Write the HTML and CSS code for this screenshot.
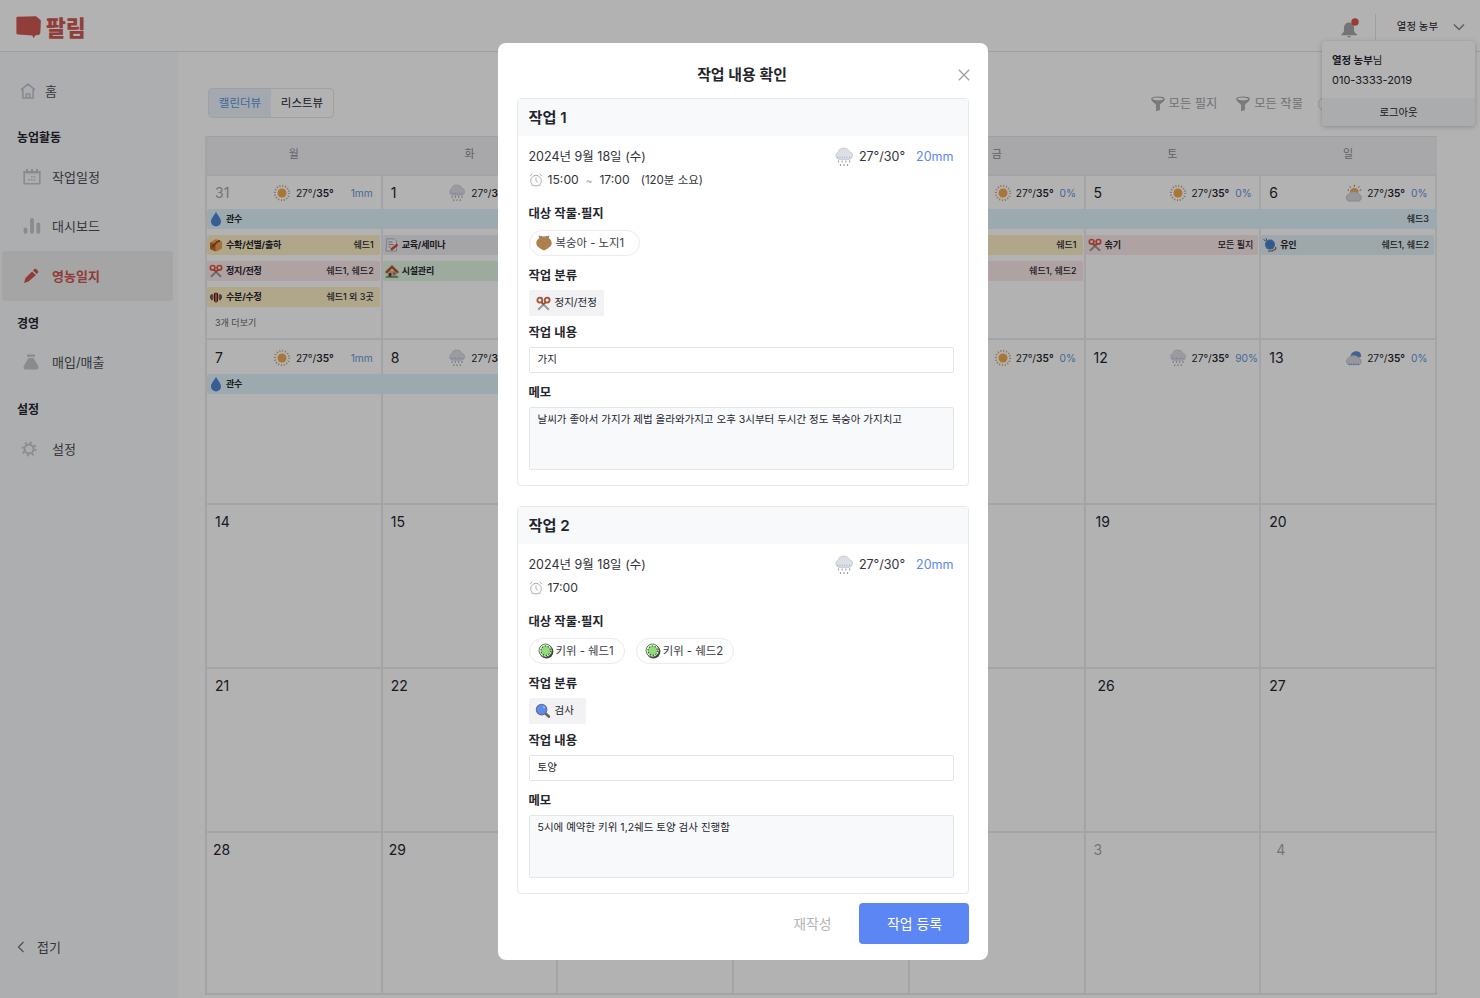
FILE: index.html
```html
<!DOCTYPE html>
<html lang="ko">
<head>
    <meta charset="UTF-8">
    <meta name="viewport" content="width=device-width, initial-scale=1.0">
    <title>팔림 - 영농일지</title>
    <link rel="stylesheet" href="styles.css">
</head>
<body>

    <!-- icons -->
    <svg class="defs" width="0" height="0">
        <symbol id="sun" viewBox="0 0 20 20">
            <circle cx="10" cy="10" r="8" fill="none" stroke="#c99a6a" stroke-width="2.2" stroke-dasharray="1.1 2.04"/>
            <circle cx="10" cy="10" r="5" fill="#f5a850"/>
        </symbol>
        <symbol id="rain" viewBox="0 0 20 20">
            <path d="M5 12.5a4 4 0 0 1-.6-7.6A5 5 0 0 1 10 1.2a5 5 0 0 1 5.2 3.4 4 4 0 0 1-.2 7.9z" fill="#dedfe5" stroke="#c6c7ce" stroke-width=".8"/>
            <path d="M3 10.4h14" stroke="#9eb4e8" stroke-width="1.5" stroke-dasharray="1 1.4"/>
            <path d="M4.5 13.5v2M8.2 13.5v2M11.9 13.5v2M15.6 13.5v2M6.4 17v2M10 17v2M13.6 17v2" stroke="#9b9ca6" stroke-width="1.1"/>
        </symbol>
        <symbol id="suncloud" viewBox="0 0 20 20">
            <path d="M5.4 9.5a5 5 0 0 1 10 0z" fill="#f5a850"/>
            <path d="M10.4 1v1.8M5.2 2.6l1 1.4M15.8 2.6l-1 1.4M3 6.4l1.4.6M18 6.4l-1.6.6" stroke="#8a6b3c" stroke-width="1.1"/>
            <path d="M4.5 19a4 4 0 0 1-.6-7.6 7 7 0 0 1 11.6 0A4 4 0 0 1 15.5 19z" fill="#d8d9df" stroke="#b6b7c0" stroke-width=".8"/>
        </symbol>
        <symbol id="nightcloud" viewBox="0 0 20 20">
            <path d="M6 9c0-4 3-6.5 6.5-6.5S18 4.500 18 8.500L14 10z" fill="#5e8fd0"/>
            <path d="M4.500 17.500a4 4 0 0 1-.6-7.400 7 6.500 0 0 1 11.600 0 4 4 0 0 1 0 7.400z" fill="#d8d9df" stroke="#b6b7c0" stroke-width=".8"/>
            <path d="M4 17h12" stroke="#6f9fe0" stroke-width="1.500" stroke-dasharray="1.500 1"/>
        </symbol>
        <symbol id="drop" viewBox="0 0 12 16">
            <path d="M6 1C8 4.600 11 7.300 11 10.400A5 5 0 0 1 1 10.400C1 7.300 4 4.600 6 1z" fill="#5086d6"/>
        </symbol>
        <symbol id="box" viewBox="0 0 14 14">
            <path d="M1 4.500 7 1l6 2.500v7L7.500 13.500 1 11z" fill="#f0a04e"/>
            <path d="M1 4.500 6.500 6v7.500L1 11z" fill="#c36a2c"/>
            <path d="M3 9 8 4l3-1.500" fill="none" stroke="#8a3d22" stroke-width="1.500"/>
        </symbol>
        <symbol id="scissors" viewBox="0 0 14 14">
            <path d="M4.800 5.800 12 12.800M9.200 5.800 2 12.800" stroke="#9a9aa0" stroke-width="1.900"/>
            <circle cx="3.600" cy="3.800" r="2.300" fill="none" stroke="currentColor" stroke-width="1.700"/>
            <circle cx="10.400" cy="3.800" r="2.300" fill="none" stroke="currentColor" stroke-width="1.700"/>
            <path d="M5 5.400 7 7.800l2-2.400" fill="none" stroke="currentColor" stroke-width="1.500"/>
        </symbol>
        <symbol id="bee" viewBox="0 0 14 14">
            <path d="M2 4.500 3.800 4v6L2.500 10.500Q.5 8.500 1 6zM12 4.500 10.200 4v6l1.300.5Q13.500 8.500 13 6z" fill="#5b5463"/>
            <path d="M7 2.500q2.600 0 2.600 4.500T7 13Q4.400 11.500 4.400 7T7 2.500z" fill="#c9562a"/>
            <path d="M5.600 3v8.500M8.400 3v8.500" stroke="#33222c" stroke-width="1"/>
            <path d="M7 4v7" stroke="#d98a6a" stroke-width=".8"/>
        </symbol>
        <symbol id="note" viewBox="0 0 14 14">
            <path d="M2 .8h7l2.500 2.500V13H1z" fill="#f4f4f7" stroke="#a6a6ad" stroke-width=".8"/>
            <path d="M3.500 4h4M3.500 6.500h5M3.500 9h2" stroke="#85858d" stroke-width=".9"/>
            <path d="M6 11.800 12.500 6.500" stroke="#da4a35" stroke-width="2.400"/>
        </symbol>
        <symbol id="house" viewBox="0 0 14 14">
            <path d="M2.500 6.500h9V13h-9z" fill="#e5b183"/>
            <path d="M.4 8 7 1.500 13.600 8l-1.400 1L7 4.200 1.800 9z" fill="#b0522f" stroke="#b0522f" stroke-width=".8"/>
            <path d="M3.800 9h2.500v4H3.800z" fill="#5b3440"/>
            <path d="M8 8.500h2.400v2H8z" fill="#4f79c4"/>
            <path d="M.8 13h12.400" stroke="#4d8a4d" stroke-width="1.400"/>
        </symbol>
        <symbol id="yarn" viewBox="0 0 14 14">
            <path d="M.5 1.500l3 2M3 .3l1 2.500" stroke="#6d6d75" stroke-width="1"/>
            <circle cx="7" cy="6.600" r="5" fill="#4d86d0"/>
            <path d="M3.500 5.500l6 5M5 3.500l6 4.500" stroke="#3b6bb0" stroke-width=".7"/>
            <path d="M12.500 9c1.200 2-1 3.300-3 3.200M5 13h5" fill="none" stroke="#7a5648" stroke-width="1.100"/>
        </symbol>
        <symbol id="clock" viewBox="0 0 14 14">
            <circle cx="7" cy="7.700" r="5.300" fill="none" stroke="#a4a4aa" stroke-width=".9"/>
            <path d="M7 4.800v3.100l1.900 1.500M.8 3.200 3.300.9M13.200 3.200 10.700.9M3.300 12l-1 1.300M10.700 12l1 1.300" fill="none" stroke="#a4a4aa" stroke-width=".9"/>
        </symbol>
        <symbol id="peach" viewBox="0 0 16 16">
            <path d="M2.500.4 8 1.500l5.500-1.100-1 3.800h-9z" fill="#8a8a8e"/>
            <path d="M8 2.300c4.500 0 7.700 2 7.700 5.900 0 3.800-4.700 5.300-7.700 7.400C5 13.500.3 12 .3 8.200.3 4.300 3.500 2.300 8 2.300z" fill="#b07f4b"/>
        </symbol>
        <symbol id="kiwi" viewBox="0 0 16 16">
            <circle cx="8.500" cy="8.600" r="6.900" fill="#3b3f3b"/>
            <circle cx="7.500" cy="7.500" r="6.500" fill="#f1f7ee" stroke="#4c6b45" stroke-width=".9"/>
            <circle cx="7.700" cy="7.700" r="5" fill="#8fdc79"/>
            <circle cx="7.700" cy="7.700" r="4.700" fill="none" stroke="#2f4f2c" stroke-width="1.100" stroke-dasharray="1.300 1.650"/>
        </symbol>
        <symbol id="glass" viewBox="0 0 16 16">
            <path d="M10.500 10.500 13.800 13.600" stroke="#62656c" stroke-width="2.700" stroke-linecap="round"/>
            <circle cx="6.600" cy="6.600" r="5.300" fill="#5a8bee" stroke="#6d6e75" stroke-width="1.100"/>
            <path d="M8.500 3.800l1 1" stroke="#c9dcfc" stroke-width="1.300"/>
        </symbol>
        <symbol id="funnel" viewBox="0 0 14 16">
            <path d="M.6 3.200C.6 6.200 5 7.500 5 9v6.300l4-1.200V9c0-1.500 4.400-2.800 4.400-5.800z" fill="#b0b0b4"/>
            <ellipse cx="7" cy="3" rx="6.200" ry="2" fill="#fff" stroke="#a5a5aa" stroke-width="1.200"/>
        </symbol>
    </svg>

    <header class="header">
        <div class="logo">
            <svg width="26" height="23" viewBox="0 0 26 23"><path d="M1.500.8 20 .3 24 3.500q1 .5.900 2L24.300 17q-.1 1.800-2 1.900l-2.800.3-1.900 3-1.300-2.800L2 18.500Q.4 18.400.4 17V2Q.4.900 1.500.8z" fill="#cf5a53"/></svg>
            <span>팔림</span>
        </div>
        <div class="header-right">
            <svg class="bell" width="18" height="20" viewBox="0 0 18 20">
                <path d="M8 4.500a5 5 0 0 1 5 5V13q.5 2 3 3.200v1H.4v-1Q2.500 15 3 13V9.500a5 5 0 0 1 5-5zM5.800 18h4.600L8.100 19.800z" fill="#a7a7ab"/>
                <circle cx="14" cy="4" r="3.700" fill="#d8574b"/>
            </svg>
            <div class="user">
                <span>열정 농부</span>
                <svg width="12" height="8" viewBox="0 0 12 8"><path d="M1 1.500 6 6.500 11 1.500" fill="none" stroke="#87878d" stroke-width="1.500"/></svg>
            </div>
        </div>
        <div class="user-menu">
            <div class="user-info">
                <p><b>열정 농부</b>님</p>
                <p class="phone">010-3333-2019</p>
            </div>
            <div class="logout">로그아웃</div>
        </div>
    </header>

    <div class="container">
        <nav class="sidebar">
            <a class="menu home">
                <svg width="16" height="16" viewBox="0 0 16 16"><path d="M1 6.800 8 1l7 5.800M2.800 6v9h10.400V6M6.300 15v-4h3.400v4" fill="none" stroke="#c6c6cd" stroke-width="1.700"/></svg>
                홈
            </a>
            <h3>농업활동</h3>
            <a class="menu">
                <svg width="18" height="18" viewBox="0 0 18 18"><path d="M1.200 4h15.600v11.800H1.200z" fill="none" stroke="#c6c6cd" stroke-width="1.600"/><path d="M.4 3h17.200v2.600H.4zM3 1h2v3H3zM8 1h2v3H8zM13 1h2v3h-2z" fill="#c6c6cd"/><path d="M8 8.700h5.500M5 11.700h8.500" stroke="#c6c6cd" stroke-width="1.600" stroke-dasharray="1.600 1.200"/></svg>
                작업일정
            </a>
            <a class="menu">
                <svg width="18" height="18" viewBox="0 0 18 18"><path d="M2.500 14.800v-2.500M9 14.800V2.800M15.300 14.800V7.500" stroke="#c6c6cd" stroke-width="3.800" stroke-linecap="round"/></svg>
                대시보드
            </a>
            <a class="menu active">
                <svg width="16" height="16" viewBox="0 0 16 16"><path d="M9 3.400 13 7 5.500 13.500 1 15 2.500 10zM10 2.500l1.500-1.400q1.200-.7 2.300.5l1 1.100q1 1.200 0 2.200L13.800 6z" fill="#cf554c"/></svg>
                영농일지
            </a>
            <h3>경영</h3>
            <a class="menu">
                <svg width="16" height="16" viewBox="0 0 16 16"><path d="M4 .5h8v2.300H4zM5.500 4h5L15 11.500q1.500 4-2.500 4h-9q-4 0-2.500-4z" fill="#c6c6cd"/></svg>
                매입/매출
            </a>
            <h3>설정</h3>
            <a class="menu gear">
                <svg width="16" height="16" viewBox="0 0 16 16"><circle cx="8" cy="8" r="6.500" fill="none" stroke="#c6c6cd" stroke-width="2" stroke-dasharray="2 3.100"/><circle cx="8" cy="8" r="4.500" fill="none" stroke="#c6c6cd" stroke-width="1.900"/></svg>
                설정
            </a>
            <div class="fold">
                <svg width="8" height="12" viewBox="0 0 8 12"><path d="M6.500 1 1.500 6l5 5" fill="none" stroke="#77777d" stroke-width="1.300"/></svg>
                접기
            </div>
        </nav>

        <main class="main">
            <div class="toolbar">
                <div class="toggle">
                    <span class="on">캘린더뷰</span>
                    <span>리스트뷰</span>
                </div>
                <div class="filters">
                    <span><svg width="14" height="16"><use href="#funnel"/></svg>모든 필지</span>
                    <span><svg width="14" height="16"><use href="#funnel"/></svg>모든 작물</span>
                    <span class="round"></span>
                </div>
            </div>

            <div class="calendar">
                <div class="weekdays">
                    <span>월</span><span>화</span><span>수</span><span>목</span><span>금</span><span>토</span><span>일</span>
                </div>

                <div class="week">
                    <div class="cell c1"></div><div class="cell c2"></div><div class="cell c3"></div><div class="cell c4"></div><div class="cell c5"></div><div class="cell c6"></div><div class="cell c7"></div>
                    <div class="date c1 out"><i>31</i><svg width="18" height="18"><use href="#sun"/></svg><span>27°/<b>35°</b></span><em class="mm">1mm</em></div>
                    <div class="date c2"><i>1</i><svg width="18" height="18"><use href="#rain"/></svg><span>27°/<b>30°</b></span><em class="mm"></em></div>
                    <div class="date c5"><i></i><svg width="18" height="18"><use href="#sun"/></svg><span>27°/<b>35°</b></span><em>0%</em></div>
                    <div class="date c6"><i>5</i><svg width="18" height="18"><use href="#sun"/></svg><span>27°/<b>35°</b></span><em>0%</em></div>
                    <div class="date c7"><i>6</i><svg width="18" height="18"><use href="#suncloud"/></svg><span>27°/<b>35°</b></span><em>0%</em></div>

                    <div class="bar r2 all blue"><svg width="14" height="16"><use href="#drop"/></svg><b>관수</b><span>쉐드3</span></div>
                    <div class="bar r3 c1 yellow"><svg width="14" height="14"><use href="#box"/></svg><b>수확/선별/출하</b><span>쉐드1</span></div>
                    <div class="bar r3 c2 gray"><svg width="14" height="14"><use href="#note"/></svg><b>교육/세미나</b></div>
                    <div class="bar r3 c5 yellow"><span>쉐드1</span></div>
                    <div class="bar r3 c6 pink"><svg width="14" height="14"><use href="#scissors"/></svg><b>솎기</b><span>모든 필지</span></div>
                    <div class="bar r3 c7 sky"><svg width="14" height="14"><use href="#yarn"/></svg><b>유인</b><span>쉐드1, 쉐드2</span></div>
                    <div class="bar r4 c1 pink"><svg width="14" height="14"><use href="#scissors"/></svg><b>정지/전정</b><span>쉐드1, 쉐드2</span></div>
                    <div class="bar r4 c2 green"><svg width="14" height="14"><use href="#house"/></svg><b>시설관리</b></div>
                    <div class="bar r4 c5 pink"><span>쉐드1, 쉐드2</span></div>
                    <div class="bar r5 c1 yellow"><svg width="14" height="14"><use href="#bee"/></svg><b>수분/수정</b><span>쉐드1 외 3곳</span></div>
                    <div class="more">3개 더보기</div>
                </div>

                <div class="week second">
                    <div class="cell c1"></div><div class="cell c2"></div><div class="cell c3"></div><div class="cell c4"></div><div class="cell c5"></div><div class="cell c6"></div><div class="cell c7"></div>
                    <div class="date c1"><i>7</i><svg width="18" height="18"><use href="#sun"/></svg><span>27°/<b>35°</b></span><em class="mm">1mm</em></div>
                    <div class="date c2"><i>8</i><svg width="18" height="18"><use href="#rain"/></svg><span>27°/<b>30°</b></span><em class="mm"></em></div>
                    <div class="date c5"><i></i><svg width="18" height="18"><use href="#sun"/></svg><span>27°/<b>35°</b></span><em>0%</em></div>
                    <div class="date c6"><i>12</i><svg width="18" height="18"><use href="#rain"/></svg><span>27°/<b>35°</b></span><em>90%</em></div>
                    <div class="date c7"><i>13</i><svg width="18" height="18"><use href="#nightcloud"/></svg><span>27°/<b>35°</b></span><em>0%</em></div>
                    <div class="bar r2 half blue"><svg width="14" height="16"><use href="#drop"/></svg><b>관수</b></div>
                </div>

                <div class="week">
                    <div class="cell c1"></div><div class="cell c2"></div><div class="cell c3"></div><div class="cell c4"></div><div class="cell c5"></div><div class="cell c6"></div><div class="cell c7"></div>
                    <div class="date c1"><i>14</i></div>
                    <div class="date c2"><i>15</i></div>
                    <div class="date c6 in"><i>19</i></div>
                    <div class="date c7"><i>20</i></div>
                </div>

                <div class="week">
                    <div class="cell c1"></div><div class="cell c2"></div><div class="cell c3"></div><div class="cell c4"></div><div class="cell c5"></div><div class="cell c6"></div><div class="cell c7"></div>
                    <div class="date c1"><i>21</i></div>
                    <div class="date c2"><i>22</i></div>
                    <div class="date c6 in2"><i>26</i></div>
                    <div class="date c7"><i>27</i></div>
                </div>

                <div class="week last">
                    <div class="cell c1"></div><div class="cell c2"></div><div class="cell c3"></div><div class="cell c4"></div><div class="cell c5"></div><div class="cell c6"></div><div class="cell c7"></div>
                    <div class="date c1 in0"><i>28</i></div>
                    <div class="date c2 in0"><i>29</i></div>
                    <div class="date c6 out"><i>3</i></div>
                    <div class="date c7 out in3"><i>4</i></div>
                </div>
            </div>
        </main>
    </div>

    <div class="overlay">
        <div class="modal">
            <div class="modal-title">
                <h2>작업 내용 확인</h2>
                <svg width="12" height="12" viewBox="0 0 12 12"><path d="M.8.8l10.400 10.400M11.200.8.8 11.200" stroke="#9d9da3" stroke-width="1.300"/></svg>
            </div>

            <section class="card">
                <h3>작업 1</h3>
                <div class="card-body">
                    <div class="row day">
                        <span>2024년 9월 18일 (수)</span>
                        <div class="weather"><svg width="20" height="20"><use href="#rain"/></svg><span>27°/30°</span><em>20mm</em></div>
                    </div>
                    <div class="row time"><svg width="14" height="14"><use href="#clock"/></svg><span>15:00</span><span class="wave">~</span><span>17:00</span><span class="took">(120분 소요)</span></div>
                    <h4>대상 작물·필지</h4>
                    <div class="chips">
                        <span class="chip peach"><svg width="16" height="16"><use href="#peach"/></svg>복숭아 - 노지1</span>
                    </div>
                    <h4>작업 분류</h4>
                    <div class="tag cut"><svg width="15" height="15"><use href="#scissors"/></svg>정지/전정</div>
                    <h4>작업 내용</h4>
                    <div class="input">가지</div>
                    <h4 class="memo-title">메모</h4>
                    <div class="input memo">날씨가 좋아서 가지가 제법 올라와가지고 오후 3시부터 두시간 정도 복숭아 가지치고</div>
                </div>
            </section>

            <section class="card">
                <h3>작업 2</h3>
                <div class="card-body">
                    <div class="row day">
                        <span>2024년 9월 18일 (수)</span>
                        <div class="weather"><svg width="20" height="20"><use href="#rain"/></svg><span>27°/30°</span><em>20mm</em></div>
                    </div>
                    <div class="row time"><svg width="14" height="14"><use href="#clock"/></svg><span>17:00</span></div>
                    <h4>대상 작물·필지</h4>
                    <div class="chips">
                        <span class="chip"><svg width="16" height="16"><use href="#kiwi"/></svg>키위 - 쉐드1</span>
                        <span class="chip"><svg width="16" height="16"><use href="#kiwi"/></svg>키위 - 쉐드2</span>
                    </div>
                    <h4>작업 분류</h4>
                    <div class="tag"><svg width="16" height="16"><use href="#glass"/></svg>검사</div>
                    <h4>작업 내용</h4>
                    <div class="input">토양</div>
                    <h4 class="memo-title">메모</h4>
                    <div class="input memo">5시에 예약한 키위 1,2쉐드 토양 검사 진행함</div>
                </div>
            </section>

            <div class="buttons">
                <button class="btn-text">재작성</button>
                <button class="btn">작업 등록</button>
            </div>
        </div>
    </div>

</body>
</html>
```

FILE: styles.css
```css
*{
    box-sizing: border-box;
    margin: 0;
    padding: 0;
}
body{
    height: 998px;
    overflow: hidden;
    background-color: #fff;
    color: #25252d;
    font-family: Inter, "Noto Sans CJK KR", sans-serif;
    font-size: 13px;
    line-height: 20px;
    white-space: nowrap;
}
svg{
    flex: none;
    display: block;
}
i, em{
    font-style: normal;
}
.defs{
    position: absolute;
}

/* header */
.header{
    position: relative;
    display: flex;
    justify-content: space-between;
    height: 52px;
    border-bottom: 1px solid #e4e4e8;
}
.logo{
    display: flex;
    align-items: center;
    gap: 4px;
    padding: 4px 0 0 16px;
    color: #cf5a53;
    font-size: 21.6px;
    font-weight: 900;
}
.header-right{
    display: flex;
    align-items: flex-start;
    padding-right: 15px;
}
.bell{
    margin: 18px 16px 0 0;
}
.user{
    display: flex;
    align-items: center;
    gap: 15px;
    height: 26px;
    margin-top: 14px;
    padding-left: 21px;
    border-left: 1px solid #e4e4e8;
    font-size: 10.4px;
}
.user-menu{
    position: absolute;
    top: 41px;
    right: 5px;
    z-index: 2;
    width: 153px;
    height: 85px;
    border-radius: 4px;
    background-color: #fff;
    box-shadow: 0 1px 5px rgba(40, 40, 60, 0.25);
    font-size: 10.4px;
    overflow: hidden;
}
.user-info{
    height: 57px;
    padding: 10px 10px 0;
}
.phone{
    font-size: 11px;
    line-height: 18px;
}
.logout{
    height: 28px;
    line-height: 29px;
    text-align: center;
    background-color: #f5f6f9;
}

.container{
    display: flex;
    height: 946px;
}

/* sidebar */
.sidebar{
    display: flex;
    flex-direction: column;
    width: 178px;
    padding: 14px 5px 41px 2px;
    background-color: #f8fafd;
}
.sidebar h3{
    height: 37px;
    padding: 13px 0 0 15px;
    font-size: 12px;
    font-weight: 600;
}
.menu{
    display: grid;
    grid-template-columns: 18px 1fr;
    column-gap: 11px;
    align-items: center;
    justify-items: start;
    height: 49.400px;
    padding-left: 21px;
    color: #4c4c55;
    font-size: 13px;
}
.home{
    column-gap: 7px;
    padding-left: 18px;
}
.gear{
    column-gap: 13px;
    padding-left: 19px;
}
.active{
    border-radius: 4px;
    background-color: #ececee;
    color: #cf554c;
    font-weight: 600;
}
.fold{
    display: flex;
    align-items: center;
    gap: 12px;
    margin-top: auto;
    padding-left: 15px;
    color: #4c4c55;
}

/* calendar */
.main{
    width: 1260px;
    padding: 36px 0 0 27px;
}
.toolbar{
    display: flex;
    justify-content: space-between;
    height: 48px;
    padding-left: 3px;
}
.toggle{
    display: flex;
    height: 30px;
    border: 1px solid #e4e5ea;
    border-radius: 4px;
    overflow: hidden;
    font-size: 11.500px;
    line-height: 29px;
}
.toggle span{
    width: 62px;
    text-align: center;
}
.toggle .on{
    background-color: #eaf3fb;
    color: #5c94dc;
}
.filters{
    display: flex;
    gap: 19px;
    height: 31px;
    margin-right: 86px;
    color: #a2a2a8;
    font-size: 12.300px;
}
.filters span{
    display: flex;
    align-items: center;
    gap: 4px;
}
.filters .round{
    width: 34px;
    height: 14px;
    margin: 9px 0 0 -4px;
    border: 1px solid #d4d4d8;
    border-radius: 7px;
}
.calendar{
    width: 1232px;
    border-left: 2px solid #ebebef;
    border-top: 1px solid #e6e6ea;
}
.weekdays, .week{
    display: grid;
    grid-template-columns: repeat(7, 1fr);
}
.weekdays{
    height: 37px;
    background-color: #f1f1f4;
    color: #8d8d94;
    font-size: 11px;
    line-height: 35px;
    text-align: center;
}
.weekdays span{
    margin-left: -2px;
}
.week{
    grid-template-rows: 33px repeat(5, 26px);
    height: 164.300px;
    border-top: 2px solid #ebebef;
}
.second{
    grid-template-rows: 34px repeat(5, 25px);
}
.cell{
    grid-row: 1 / -1;
    height: 162.300px;
    border-right: 2px solid #ebebef;
}
.last{
    border-bottom: 2px solid #ebebef;
}
.c1{ grid-column: 1; }
.c2{ grid-column: 2; }
.c3{ grid-column: 3; }
.c4{ grid-column: 4; }
.c5{ grid-column: 5; }
.c6{ grid-column: 6; }
.c7{ grid-column: 7; }
.all{ grid-column: 1 / 8; }
.half{ grid-column: 1 / 4; }
.r2{ grid-row: 2; }
.r3{ grid-row: 3; }
.r4{ grid-row: 4; }
.r5{ grid-row: 5; }
.date{
    grid-row: 1;
    display: flex;
    align-items: center;
    padding: 1px 9px 0 8px;
    font-size: 10.200px;
}
.date i{
    margin-right: auto;
    font-size: 14px;
}
.date svg{
    margin-right: 4px;
}
.date.c1, .date.c2{
    padding-right: 10px;
}
.date.c1 svg, .date.c2 svg{
    margin-right: 5px;
}
.date b{
    font-weight: 600;
}
.date em{
    width: 17px;
    margin-left: 6px;
    color: #5f97dc;
}
.date .mm{
    width: 22px;
    margin-left: 17px;
}
.out i{
    color: #a7a7ad;
}
.in0{
    padding-left: 6px;
}
.in{
    padding-left: 10px;
}
.in2{
    padding-left: 12px;
}
.in3{
    padding-left: 15px;
}
.bar{
    display: flex;
    align-items: center;
    height: 20px;
    margin-right: 3px;
    padding: 0 5px 0 2px;
    border-radius: 2px;
    font-size: 9px;
}
.bar.c1, .bar.c5{
    padding-right: 6px;
}
.bar svg{
    margin-right: 3px;
    color: #dd5544;
}
.bar b{
    font-weight: 700;
    letter-spacing: -0.2px;
}
.bar span{
    margin-left: auto;
    font-weight: 500;
}
.all, .half{
    margin-right: 0;
    padding-right: 8px;
}
.blue{ background-color: #e0f4fd; }
.yellow{ background-color: #fdefc8; }
.pink{ background-color: #fbe8e9; }
.green{ background-color: #e0f5e2; }
.sky{ background-color: #e2eff2; }
.gray{
    margin-right: 0;
    background-color: #ececf0;
}
.green{
    margin-right: 0;
}
.more{
    grid-row: 6;
    grid-column: 1;
    padding-left: 8px;
    color: #66666e;
    font-size: 9px;
}

/* modal */
.overlay{
    position: fixed;
    inset: 0;
    z-index: 10;
    padding-left: 5px;
    display: flex;
    justify-content: center;
    align-items: flex-start;
    background-color: rgba(0, 0, 0, 0.3);
}
.modal{
    width: 490px;
    height: 917px;
    margin-top: 43px;
    padding: 0 19px;
    border-radius: 8px;
    background-color: #fff;
}
.modal-title{
    display: grid;
    grid-template-columns: 12px 1fr 12px;
    align-items: center;
    height: 55px;
    margin-right: -1px;
    padding-top: 8px;
    text-align: center;
}
.modal-title h2{
    grid-column: 2;
    padding-right: 2px;
    font-size: 14.900px;
    font-weight: 600;
}
.card{
    height: 388px;
    margin-bottom: 20px;
    border: 1px solid #e7e8ec;
    border-radius: 4px;
}
.card h3{
    height: 37px;
    padding-left: 11px;
    background-color: #f8f9fb;
    font-size: 15.200px;
    font-weight: 600;
    line-height: 37px;
}
.card-body{
    padding: 9px 14px 0 11px;
}
.row{
    display: flex;
    align-items: center;
    height: 24px;
    font-size: 12.200px;
    color: #33333b;
}
.day{
    justify-content: space-between;
    font-size: 12.500px;
}
.weather{
    display: flex;
    align-items: center;
}
.weather svg{
    margin-right: 5px;
}
.weather em{
    margin-left: 11px;
    color: #5c86f4;
}
.time{
    padding-bottom: 2px;
}
.time svg{
    margin-right: 5px;
}
.wave{
    margin: 0 7px;
    color: #a4a4aa;
    font-size: 10px;
}
.took{
    margin-left: 11px;
    font-size: 11.500px;
}
.card h4{
    font-size: 12.350px;
    font-weight: 600;
}
.time + h4{
    margin-top: 11px;
}
.chips{
    display: flex;
    gap: 11px;
    margin: 6px 0 10px;
}
.chip{
    display: flex;
    align-items: center;
    gap: 2px;
    height: 26px;
    padding: 0 10px 0 8px;
    border: 1px solid #ebebef;
    border-radius: 13px;
    font-size: 11.400px;
    color: #3c3c44;
}
.peach{
    gap: 4px;
    padding: 0 15px 0 6px;
}
.tag{
    display: flex;
    align-items: center;
    gap: 4px;
    width: fit-content;
    height: 26px;
    margin: 4px 0 7px;
    padding: 0 12px 0 6px;
    border-radius: 2px;
    background-color: #f2f2f4;
    font-size: 10.500px;
}
.cut{
    gap: 4px;
    padding: 0 7px;
}
.cut svg{
    color: #a4532f;
}
.input{
    height: 26px;
    margin-top: 4px;
    padding-left: 8px;
    border: 1px solid #e4e5e9;
    border-radius: 2px;
    font-size: 10.500px;
    line-height: 24px;
}
.memo-title{
    margin-top: 10px;
}
.memo{
    height: 63px;
    background-color: #f8f9fb;
}
.buttons{
    display: flex;
    justify-content: flex-end;
    gap: 27px;
    margin-top: -11px;
}
.buttons button{
    border: none;
    padding-bottom: 2px;
    font-family: inherit;
    font-size: 13.900px;
}
.btn-text{
    background: none;
    color: #b4b4b9;
}
.btn{
    width: 110px;
    height: 41px;
    padding-left: 2px;
    border-radius: 4px;
    background-color: #5c86f4;
    color: #fff;
}
```
